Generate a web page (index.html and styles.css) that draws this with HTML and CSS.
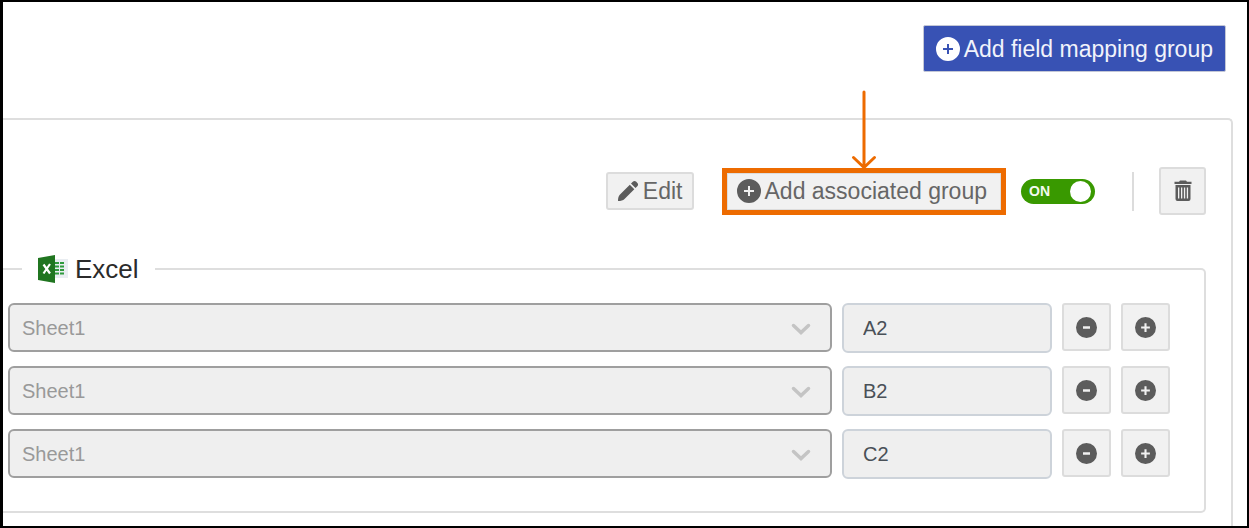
FILE: index.html
```html
<!DOCTYPE html>
<html lang="en">
<head>
    <meta charset="UTF-8">
    <meta name="viewport" content="width=device-width, initial-scale=1.0">
    <title>Field mapping</title>
    <link rel="stylesheet" href="styles.css">
</head>
<body>
    <!-- shared icons -->
    <svg class="icon-defs" aria-hidden="true">
        <symbol id="icon-plus" viewBox="0 0 24 24">
            <path fill-rule="evenodd" d="M12 0a12 12 0 1 0 0 24a12 12 0 1 0 0-24zM11 7h2v4h4v2h-4v4h-2v-4h-4v-2h4z"/>
        </symbol>
        <symbol id="icon-minus" viewBox="0 0 24 24">
            <path fill-rule="evenodd" d="M12 0a12 12 0 1 0 0 24a12 12 0 1 0 0-24zM8 10.700h8v2.600h-8z"/>
        </symbol>
        <symbol id="icon-plus-bold" viewBox="0 0 24 24">
            <path fill-rule="evenodd" d="M12 0a12 12 0 1 0 0 24a12 12 0 1 0 0-24zM10.800 7h2.400v3.800h3.800v2.400h-3.800v3.800h-2.400v-3.800h-3.800v-2.400h3.800z"/>
        </symbol>
        <symbol id="icon-chevron" viewBox="0 0 20 14">
            <path d="M2.500 3.500L10 10.500L17.500 3.500" fill="none" stroke="currentColor" stroke-width="3.500" stroke-linecap="round"/>
        </symbol>
    </svg>

    <div class="page">
        <header class="top-bar">
            <button type="button" class="btn btn-primary">
                <svg class="icon"><use href="#icon-plus"/></svg>
                Add field mapping group
            </button>
        </header>

        <main class="panel">
            <div class="toolbar">
                <button type="button" class="btn btn-edit">
                    <svg class="icon-pencil" viewBox="0 0 22 22"><path d="M1 21c0-3 .5-5 2-6.500L12.800 4.700l4.500 4.500L7.500 19c-1.500 1.500-3.500 2-6.500 2zM14 3.500l1.800-1.800c1-1 2.300-1 3.200-.1l1.400 1.400c.9.900.9 2.200-.1 3.200L18.500 8z"/></svg>
                    Edit
                </button>

                <div class="highlight">
                    <svg class="arrow" viewBox="0 0 26 80"><path d="M13 2V77M2.500 67.500L13 77.500L23.500 67.500"/></svg>
                    <button type="button" class="btn btn-associated">
                        <svg class="icon"><use href="#icon-plus"/></svg>
                        Add associated group
                    </button>
                </div>

                <label class="switch">
                    <input type="checkbox" checked aria-label="Group enabled">
                    <span class="switch-text">ON</span>
                    <span class="switch-knob"></span>
                </label>

                <span class="divider"></span>

                <button type="button" class="btn btn-delete" aria-label="Delete group">
                    <svg class="icon-trash" viewBox="0 0 18 22"><path fill-rule="evenodd" d="M6 .5h6l1 1.200h4.500v2.300H.5V1.700H5zM1.500 5h15v14a2 2 0 0 1-2 2h-11a2 2 0 0 1-2-2zM4 7.500v11h1.300v-11zM7 7.500v11h1.300v-11zM9.900 7.500v11h1.300v-11zM12.800 7.500v11h1.300v-11z"/></svg>
                </button>
            </div>

            <fieldset class="mapping">
                <legend>
                    <svg class="icon-excel" viewBox="0 0 30 28">
                        <path fill="#e9edf1" d="M15 4h15v19H15z"/>
                        <path fill="#2f9a3c" d="M17 7h4v2h-4zM22 7h4v2h-4zM17 10.500h4v2h-4zM22 10.500h4v2h-4zM17 14h4v2h-4zM22 14h4v2h-4zM17 17.500h4v2h-4zM22 17.500h4v2h-4z"/>
                        <path fill="#207520" d="M0 3L17 0v28L0 25z"/>
                        <path d="M5.500 9.500L12 18.500M12 9L5.500 18.500" fill="none" stroke="#fff" stroke-width="2.200"/>
                    </svg>
                    Excel
                </legend>

                <div class="row">
                    <div class="sheet">
                        <select disabled aria-label="Sheet for row 1"><option>Sheet1</option></select>
                        <svg class="chevron"><use href="#icon-chevron"/></svg>
                    </div>
                    <input type="text" class="cell" value="A2" aria-label="Cell for row 1">
                    <button type="button" class="btn btn-small" aria-label="Remove row 1"><svg><use href="#icon-minus"/></svg></button>
                    <button type="button" class="btn btn-small" aria-label="Add after row 1"><svg><use href="#icon-plus-bold"/></svg></button>
                </div>

                <div class="row">
                    <div class="sheet">
                        <select disabled aria-label="Sheet for row 2"><option>Sheet1</option></select>
                        <svg class="chevron"><use href="#icon-chevron"/></svg>
                    </div>
                    <input type="text" class="cell" value="B2" aria-label="Cell for row 2">
                    <button type="button" class="btn btn-small" aria-label="Remove row 2"><svg><use href="#icon-minus"/></svg></button>
                    <button type="button" class="btn btn-small" aria-label="Add after row 2"><svg><use href="#icon-plus-bold"/></svg></button>
                </div>

                <div class="row">
                    <div class="sheet">
                        <select disabled aria-label="Sheet for row 3"><option>Sheet1</option></select>
                        <svg class="chevron"><use href="#icon-chevron"/></svg>
                    </div>
                    <input type="text" class="cell" value="C2" aria-label="Cell for row 3">
                    <button type="button" class="btn btn-small" aria-label="Remove row 3"><svg><use href="#icon-minus"/></svg></button>
                    <button type="button" class="btn btn-small" aria-label="Add after row 3"><svg><use href="#icon-plus-bold"/></svg></button>
                </div>
            </fieldset>
        </main>
    </div>
</body>
</html>
```
FILE: styles.css
```css
* {
    box-sizing: border-box;
}
body {
    margin: 0;
    font-family: "Liberation Sans", Arial, sans-serif;
    background-color: #fff;
}
.icon-defs {
    position: absolute;
    width: 0;
    height: 0;
}
.page {
    display: flex;
    flex-direction: column;
    min-height: 100vh;
    border: 2px solid #000;
    border-left-width: 3px;
}
.top-bar {
    display: flex;
    justify-content: flex-end;
    padding: 23px 21px 46px;
}

/* buttons */
.btn {
    display: flex;
    align-items: center;
    justify-content: center;
    gap: 4px;
    margin: 0;
    padding: 0;
    border: 2px solid #dcdcdc;
    border-radius: 3px;
    background-color: #f1f1f1;
    color: #666;
    font-family: inherit;
    font-size: 23px;
    line-height: 26px;
    white-space: nowrap;
    cursor: pointer;
}
.btn svg {
    flex: none;
    fill: #5c5c5c;
}
.icon {
    width: 24px;
    height: 24px;
}
.btn-primary {
    height: 47px;
    padding: 0 12px;
    border: 1px solid #c3c7d6;
    border-radius: 2px;
    background-color: #3852b4;
    color: #f1f3fb;
}
.btn-primary .icon {
    fill: #fff;
}
.btn-edit {
    height: 38px;
    padding: 0 9px;
}
.icon-pencil {
    width: 22px;
    height: 22px;
}
.btn-associated {
    height: 37px;
    padding: 0 13px 0 9px;
    border-width: 1px;
    border-radius: 0;
}
.btn-delete {
    width: 47px;
    height: 48px;
}
.icon-trash {
    width: 18px;
    height: 22px;
}
.btn-small {
    width: 49px;
    height: 48px;
}
.btn-small svg {
    width: 21px;
    height: 21px;
}

/* group panel */
.panel {
    flex: 1;
    margin-right: 14px;
    padding: 47px 25px 13px 0;
    border: 2px solid #dedede;
    border-width: 2px 2px 0 0;
    border-top-right-radius: 5px;
}
.toolbar {
    display: flex;
    align-items: center;
    justify-content: flex-end;
}
.highlight {
    position: relative;
    margin-left: 28px;
    border: 5px solid #ed6b00;
}
.arrow {
    position: absolute;
    bottom: 100%;
    left: 50%;
    width: 26px;
    height: 80px;
    margin: 0 0 3px -13px;
    fill: none;
    stroke: #ed6b00;
    stroke-width: 3px;
    stroke-linecap: round;
}
.switch {
    display: flex;
    align-items: center;
    justify-content: space-between;
    width: 74px;
    height: 25px;
    margin-left: 15px;
    padding: 0 4px 0 8px;
    border-radius: 13px;
    background-color: #399900;
    cursor: pointer;
}
.switch input {
    position: absolute;
    opacity: 0;
}
.switch-text {
    color: #f3f9ef;
    font-size: 14px;
    font-weight: bold;
}
.switch-knob {
    width: 21px;
    height: 21px;
    border-radius: 50%;
    background-color: #fff;
}
.divider {
    width: 2px;
    height: 39px;
    margin: 0 25px 0 37px;
    background-color: #dcdcdc;
}

/* excel mapping */
.mapping {
    min-width: 0;
    margin: 38px 0 0;
    padding: 18px 34px 32px 5px;
    border: 2px solid #dedede;
    border-left: 0;
    border-radius: 0 5px 5px 0;
}
.mapping legend {
    display: flex;
    align-items: center;
    gap: 7px;
    margin-left: 14px;
    padding: 0 16px;
    color: #2b2b2b;
    font-size: 26px;
    line-height: 32px;
}
.icon-excel {
    width: 30px;
    height: 28px;
}
.row {
    display: flex;
    align-items: flex-start;
    gap: 10px;
    margin-bottom: 13px;
}
.row:last-child {
    margin-bottom: 0;
}
.sheet {
    position: relative;
    flex: 1;
}
.sheet select {
    display: block;
    width: 100%;
    height: 49px;
    padding: 0 12px;
    border: 2px solid #9f9f9f;
    border-radius: 6px;
    appearance: none;
    background-color: #efefef;
    color: #999;
    font-family: inherit;
    font-size: 20px;
    opacity: 1;
}
.chevron {
    position: absolute;
    top: 19px;
    right: 21px;
    width: 20px;
    height: 14px;
    color: #c4c4c4;
    pointer-events: none;
}
.cell {
    width: 210px;
    height: 50px;
    padding: 0 19px;
    border: 2px solid #cdd3da;
    border-radius: 6px;
    background-color: #efefef;
    color: #495057;
    font-family: inherit;
    font-size: 20px;
}
```
